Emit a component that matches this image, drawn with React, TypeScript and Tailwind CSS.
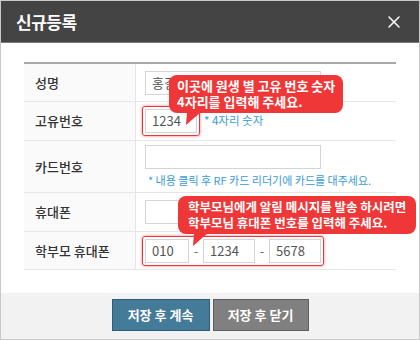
import { X } from "lucide-react";

const font = "font-['Noto_Sans_CJK_KR','Noto_Sans',sans-serif]";

function Label({ children }: { children: React.ReactNode }) {
  return (
    <div className="w-[112px] shrink-0 bg-[#fafafa] border-r border-[#e6e6e6] flex items-center pl-[11px] text-[13px] text-[#333] font-medium">
      {children}
    </div>
  );
}

function Input({ value, className }: { value?: string; className: string }) {
  return (
    <div
      className={`h-[24px] border border-[#d4d4d4] bg-white flex items-center px-[6px] text-[13px] text-[#555] ${className}`}
    >
      {value}
    </div>
  );
}

function Bubble({
  lines,
  className,
  textClass,
  tailX,
}: {
  lines: string[];
  className: string;
  textClass: string;
  tailX: number;
}) {
  return (
    <div className={`absolute z-10 ${className}`}>
      <div
        className={`bg-[#ef3737] text-white font-bold rounded-[8px] py-[3px] whitespace-nowrap ${textClass}`}
      >
        {lines.map((l) => (
          <div key={l}>{l}</div>
        ))}
      </div>
      <svg
        className="absolute top-full -mt-[1px]"
        style={{ left: tailX }}
        width="16"
        height="14"
        viewBox="0 0 16 14"
      >
        <polygon points="2,0 16,0 1,13" fill="#ef3737" />
      </svg>
    </div>
  );
}

export default function App() {
  return (
    <div
      className={`w-[420px] h-[340px] border border-[#c8c8c8] bg-white flex flex-col ${font}`}
    >
      <div className="h-[42px] shrink-0 bg-[#444444] border-b border-[#7a7a7a] flex items-center justify-between pl-[15px] pr-[15px]">
        <span className="text-white text-[17px] font-bold tracking-[-0.5px]">
          신규등록
        </span>
        <X className="text-white w-[20px] h-[20px]" strokeWidth={1.75} />
      </div>

      <div className="flex-1 px-[23px] pt-[19px]">
        <div className="border-t-2 border-[#a8a8a8] relative">
          <div className="flex h-[38px] border-b border-[#e6e6e6]">
            <Label>성명</Label>
            <div className="flex items-center pl-[9px]">
              <Input value="홍길동" className="w-[176px]" />
            </div>
          </div>

          <div className="flex h-[39px] border-b border-[#e6e6e6]">
            <Label>고유번호</Label>
            <div className="flex items-center pl-[6px] gap-[4px]">
              <div className="border border-[#e8383d] rounded-[3px] shadow-[0_0_3px_rgba(232,56,61,0.7)] p-[2px]">
                <Input value="1234" className="w-[52px]" />
              </div>
              <span className="text-[11.5px] text-[#3a9ad9]">* 4자리 숫자</span>
            </div>
          </div>

          <div className="flex h-[52px] border-b border-[#e6e6e6]">
            <Label>카드번호</Label>
            <div className="flex flex-col justify-center pl-[9px] gap-[3px]">
              <Input className="w-[176px]" />
              <span className="text-[11px] text-[#3a9ad9] pl-[3px]">
                * 내용 클릭 후 RF 카드 리더기에 카드를 대주세요.
              </span>
            </div>
          </div>

          <div className="flex h-[39px] border-b border-[#e6e6e6]">
            <Label>휴대폰</Label>
            <div className="flex items-center pl-[9px]">
              <Input className="w-[176px]" />
            </div>
          </div>

          <div className="flex h-[38px] border-b border-[#e6e6e6]">
            <Label>학부모 휴대폰</Label>
            <div className="flex items-center pl-[6px]">
              <div className="flex items-center border border-[#e8383d] rounded-[3px] shadow-[0_0_3px_rgba(232,56,61,0.7)] p-[2px]">
                <Input value="010" className="w-[44px]" />
                <span className="w-[14px] text-center text-[12px] text-[#555]">-</span>
                <Input value="1234" className="w-[52px]" />
                <span className="w-[14px] text-center text-[12px] text-[#555]">-</span>
                <Input value="5678" className="w-[52px]" />
              </div>
            </div>
          </div>

          <Bubble
            className="left-[145px] top-[11px]"
            textClass="text-[13px] leading-[16px] px-[8px]"
            tailX={16}
            lines={["이곳에 원생 별 고유 번호 숫자", "4자리를 입력해 주세요."]}
          />
          <Bubble
            className="left-[154px] top-[132px]"
            textClass="text-[12.5px] leading-[16px] px-[10px]"
            tailX={14}
            lines={[
              "학부모님에게 알림 메시지를 발송 하시려면",
              "학부모님 휴대폰 번호를 입력해 주세요.",
            ]}
          />
        </div>
      </div>

      <div className="h-[46px] shrink-0 bg-[#f2f2f2] flex items-start justify-center gap-[3px] pt-[6px]">
        <button className="w-[98px] h-[32px] bg-[#437b99] border border-[#2c5e7a] text-white text-[13px] font-bold">
          저장 후 계속
        </button>
        <button className="w-[96px] h-[32px] bg-[#808080] border border-[#5e5e5e] text-white text-[13px] font-bold">
          저장 후 닫기
        </button>
      </div>
    </div>
  );
}
